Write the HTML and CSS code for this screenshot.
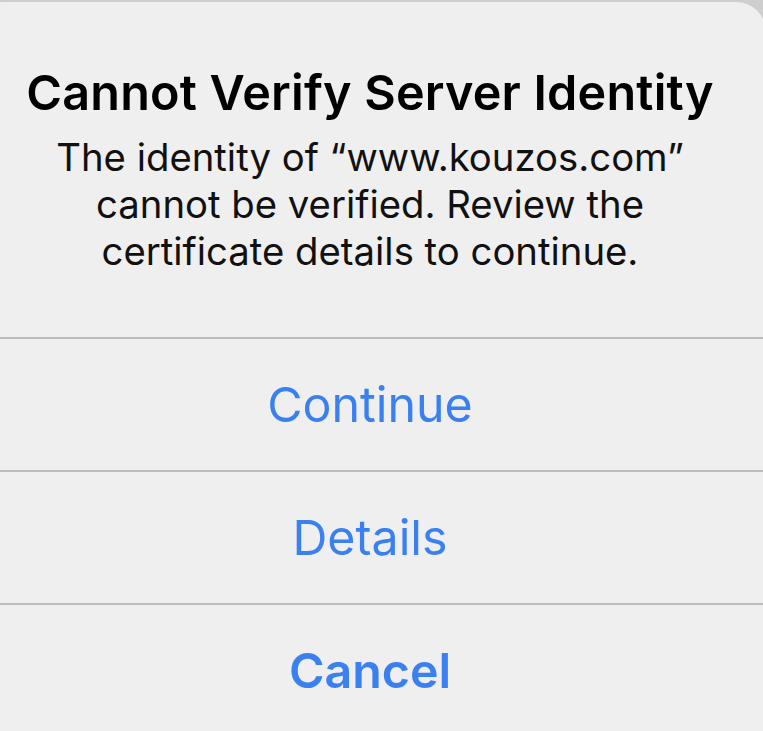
FILE: index.html
```html
<!DOCTYPE html>
<html lang="en">
<head>
    <meta charset="UTF-8">
    <meta name="viewport" content="width=device-width, initial-scale=1.0">
    <title>Cannot Verify Server Identity</title>
    <link rel="stylesheet" href="styles.css">
</head>
<body>
    <div class="alert">
        <div class="alert-body">
            <h1 class="alert-title">Cannot Verify Server Identity</h1>
            <p class="alert-message">The identity of “www.kouzos.com” cannot be verified. Review the certificate details to continue.</p>
        </div>
        <div class="alert-actions">
            <button class="alert-button">Continue</button>
            <button class="alert-button">Details</button>
            <button class="alert-button alert-button-bold">Cancel</button>
        </div>
    </div>
</body>
</html>
```

FILE: styles.css
```css
body {
    margin: 0;
    background-color: #cecece; /* dimmed backdrop behind the alert */
    font-family: Inter, "Noto Sans", sans-serif;
    overflow: hidden;
    height: 731px;
}
.alert {
    margin: 2px 0 0 -26px;
    width: 792px;
    height: 760px;
    background-color: #efefef;
    border-radius: 30px;
    color: #000;
}
.alert-body {
    padding: 64px 40px 0;
    height: 335px;
    box-sizing: border-box;
    text-align: center;
}
.alert-title {
    margin: 0;
    font-size: 48.5px;
    font-weight: 600;
    line-height: 54px;
    letter-spacing: 0.2px;
}
.alert-message {
    margin: 14px auto 0;
    max-width: 680px;
    font-size: 38.3px;
    line-height: 47px;
    color: #111;
}
.alert-actions {
    display: flex;
    flex-direction: column;
}
.alert-button {
    height: 133px;
    border: none;
    border-top: 2px solid #bcbcbc;
    background: none;
    font-family: inherit;
    font-size: 48.3px;
    color: #3a80f0;
    cursor: pointer;
}
.alert-button-bold {
    font-weight: 600;
}
```
